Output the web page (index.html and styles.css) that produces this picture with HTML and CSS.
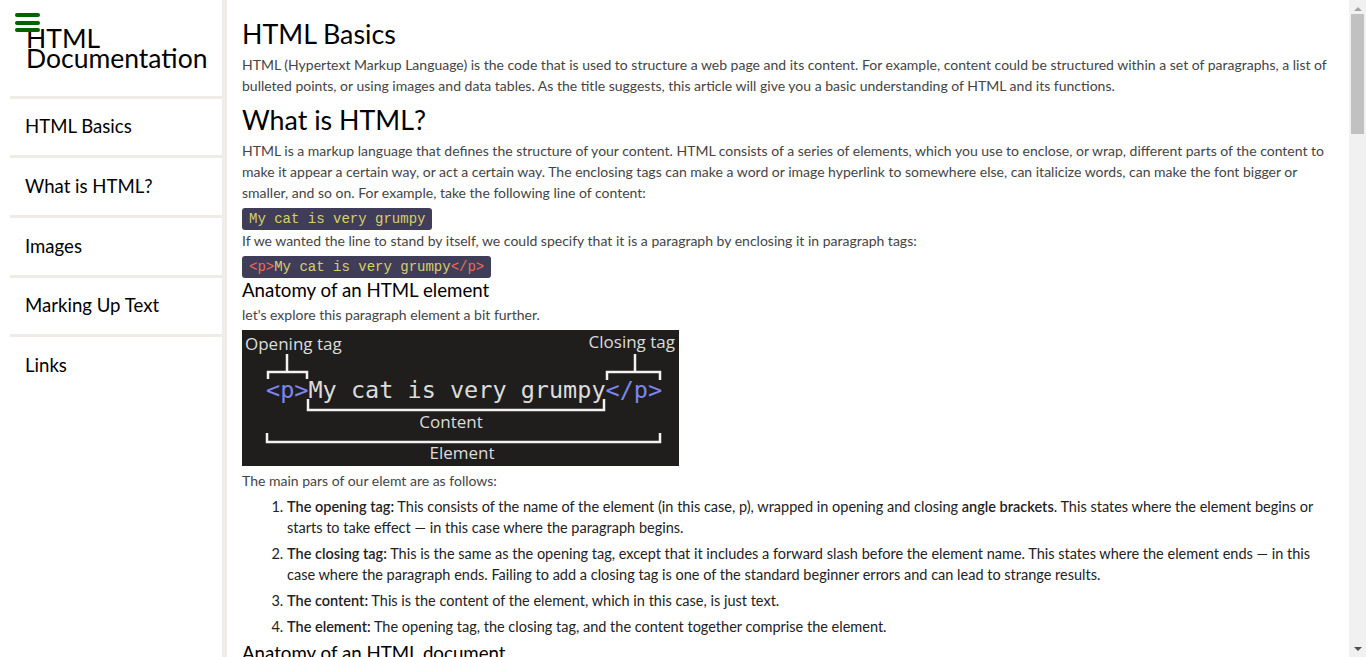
FILE: index.html
```html
<!DOCTYPE html>
<html lang="en">
<head>
<meta charset="utf-8">
<title>HTML Documentation</title>
<link rel="stylesheet" href="styles.css">
</head>
<body>
<nav class="navbar">
  <header class="nav-header">
    <span class="burger" aria-hidden="true"><i></i><i></i><i></i></span>
    <h1 class="nav-title">HTML Documentation</h1>
  </header>
  <ul class="nav-list">
    <li><a class="nav-link" href="#html_basics">HTML Basics</a></li>
    <li><a class="nav-link" href="#what_is_html">What is HTML?</a></li>
    <li><a class="nav-link" href="#images">Images</a></li>
    <li><a class="nav-link" href="#marking_up_text">Marking Up Text</a></li>
    <li><a class="nav-link" href="#links">Links</a></li>
  </ul>
</nav>
<main class="main-doc">
  <section class="main-section" id="html_basics">
    <h2 class="sec-title">HTML Basics</h2>
    <p>HTML (Hypertext Markup Language) is the code that is used to structure a web page and its content. For example, content could be structured within a set of paragraphs, a list of bulleted points, or using images and data tables. As the title suggests, this article will give you a basic understanding of HTML and its functions.</p>
  </section>
  <section class="main-section" id="what_is_html">
    <h2 class="sec-title">What is HTML?</h2>
    <p>HTML is a markup language that defines the structure of your content. HTML consists of a series of elements, which you use to enclose, or wrap, different parts of the content to make it appear a certain way, or act a certain way. The enclosing tags can make a word or image hyperlink to somewhere else, can italicize words, can make the font bigger or smaller, and so on. For example, take the following line of content:</p>
    <code class="code">My cat is very grumpy</code>
    <p>If we wanted the line to stand by itself, we could specify that it is a paragraph by enclosing it in paragraph tags:</p>
    <code class="code"><span class="tag">&lt;p&gt;</span>My cat is very grumpy<span class="tag">&lt;/p&gt;</span></code>
    <h3 class="sub-title">Anatomy of an HTML element</h3>
    <p>let's explore this paragraph element a bit further.</p>
    <svg class="anatomy" width="437" height="136" viewBox="0 0 437 136" role="img" aria-label="Anatomy of an HTML element">
      <rect width="437" height="136" fill="#1f1e1d"/>
      <g font-family="'Open Sans', 'DejaVu Sans', sans-serif" font-size="17" fill="#dcdcdc">
        <text x="3" y="20">Opening tag</text>
        <text x="433" y="18" text-anchor="end">Closing tag</text>
        <text x="209" y="98" text-anchor="middle">Content</text>
        <text x="220" y="129" text-anchor="middle">Element</text>
      </g>
      <text x="24" y="68" font-family="'DejaVu Sans Mono', monospace" font-size="23.5" fill="#dcdcdc"><tspan fill="#7d86f0">&lt;p&gt;</tspan>My cat is very grumpy<tspan fill="#7d86f0">&lt;/p&gt;</tspan></text>
      <g fill="none" stroke="#f2f2f2" stroke-width="2.5">
        <path d="M45 24 V42 M26 49 V42 H65 V49"/>
        <path d="M393 24 V42 M365 50 V42 H418 V50"/>
        <path d="M66 69 V80 H362 V69"/>
        <path d="M25 103 V112 H418 V103"/>
      </g>
    </svg>
    <p>The main pars of our elemt are as follows:</p>
    <ol class="parts">
      <li><b>The opening tag:</b> This consists of the name of the element (in this case, p), wrapped in opening and closing <b>angle brackets</b>. This states where the element begins or starts to take effect — in this case where the paragraph begins.</li>
      <li><b>The closing tag:</b> This is the same as the opening tag, except that it includes a forward slash before the element name. This states where the element ends — in this case where the paragraph ends. Failing to add a closing tag is one of the standard beginner errors and can lead to strange results.</li>
      <li><b>The content:</b> This is the content of the element, which in this case, is just text.</li>
      <li><b>The element:</b> The opening tag, the closing tag, and the content together comprise the element.</li>
    </ol>
    <h3 class="sub-title">Anatomy of an HTML document</h3>
    <p>That wraps up the basics of individual HTML elements, but they aren't handy on their own. Now we'll look at how individual elements combine to form an entire HTML page:</p>
    <code class="code block">&lt;!DOCTYPE html&gt;<br>&lt;html&gt;<br>&nbsp;&nbsp;&lt;head&gt;<br>&nbsp;&nbsp;&nbsp;&nbsp;&lt;meta charset="utf-8"&gt;<br>&nbsp;&nbsp;&nbsp;&nbsp;&lt;title&gt;My test page&lt;/title&gt;<br>&nbsp;&nbsp;&lt;/head&gt;<br>&nbsp;&nbsp;&lt;body&gt;<br>&nbsp;&nbsp;&nbsp;&nbsp;&lt;img src="images/firefox-icon.png" alt="My test image"&gt;<br>&nbsp;&nbsp;&lt;/body&gt;<br>&lt;/html&gt;</code>
    <p>Here, we have the following:</p>
    <ul class="parts">
      <li><b>&lt;!DOCTYPE html&gt;</b> — doctype. It is a required preamble.</li>
      <li><b>&lt;html&gt;&lt;/html&gt;</b> — the html element. This element wraps all the content on the entire page and is sometimes known as the root element.</li>
      <li><b>&lt;head&gt;&lt;/head&gt;</b> — the head element. This element acts as a container for all the stuff you want to include on the HTML page that isn't the content you are showing to your page's viewers.</li>
      <li><b>&lt;meta charset="utf-8"&gt;</b> — This element sets the character set your document should use to UTF-8.</li>
      <li><b>&lt;title&gt;&lt;/title&gt;</b> — the title element. This sets the title of your page, which is the title that appears in the browser tab the page is loaded in.</li>
      <li><b>&lt;body&gt;&lt;/body&gt;</b> — the body element. This contains all the content that you want to show to web users when they visit your page.</li>
    </ul>
  </section>
  <section class="main-section" id="images">
    <h2 class="sec-title">Images</h2>
    <p>Let's turn our attention to the &lt;img&gt; element again:</p>
    <code class="code">&lt;img src="images/firefox-icon.png" alt="My test image"&gt;</code>
    <p>As we said before, it embeds an image into our page in the position it appears. It does this via the src (source) attribute, which contains the path to our image file.</p>
    <p>We have also included an alt (alternative) attribute. In this attribute, you specify descriptive text for users who cannot see the image, possibly because of the following reasons:</p>
    <ol class="parts">
      <li>They are visually impaired. Users with significant visual impairments often use tools called screen readers to read out the alt text to them.</li>
      <li>Something has gone wrong causing the image not to display. For example, try deliberately changing the path inside your src attribute to make it incorrect.</li>
    </ol>
    <p>The keywords for alt text are "descriptive text". The alt text you write should provide the reader with enough information to have a good idea of what the image conveys.</p>
  </section>
  <section class="main-section" id="marking_up_text">
    <h2 class="sec-title">Marking Up Text</h2>
    <p>This section will cover some of the essential HTML elements you'll use for marking up the text.</p>
    <h3 class="sub-title">Headings</h3>
    <p>Heading elements allow you to specify that certain parts of your content are headings — or subheadings. In the same way that a book has the main title, chapter titles, and subtitles, an HTML document can too. HTML contains 6 heading levels, &lt;h1&gt;–&lt;h6&gt;, although you'll commonly only use 3 to 4 at most:</p>
    <code class="code block">&lt;h1&gt;My main title&lt;/h1&gt;<br>&lt;h2&gt;My top level heading&lt;/h2&gt;<br>&lt;h3&gt;My subheading&lt;/h3&gt;<br>&lt;h4&gt;My sub-subheading&lt;/h4&gt;</code>
    <h3 class="sub-title">Paragraphs</h3>
    <p>As explained above, &lt;p&gt; elements are for containing paragraphs of text; you'll use these frequently when marking up regular text content:</p>
    <code class="code">&lt;p&gt;This is a single paragraph&lt;/p&gt;</code>
    <h3 class="sub-title">Lists</h3>
    <p>A lot of the web's content is lists and HTML has special elements for these. Marking up lists always consists of at least 2 elements. The most common list types are ordered and unordered lists:</p>
    <ol class="parts">
      <li><b>Unordered lists</b> are for lists where the order of the items doesn't matter, such as a shopping list. These are wrapped in a &lt;ul&gt; element.</li>
      <li><b>Ordered lists</b> are for lists where the order of the items does matter, such as a recipe. These are wrapped in an &lt;ol&gt; element.</li>
    </ol>
    <p>Each item inside the lists is put inside an &lt;li&gt; (list item) element.</p>
  </section>
  <section class="main-section" id="links">
    <h2 class="sec-title">Links</h2>
    <p>Links are very important — they are what makes the web a web! To add a link, we need to use a simple element — &lt;a&gt; — "a" being the short form for "anchor". To make text within your paragraph into a link, follow these steps:</p>
    <ol class="parts">
      <li>Choose some text. We chose the text "Mozilla Manifesto".</li>
      <li>Wrap the text in an &lt;a&gt; element.</li>
      <li>Give the &lt;a&gt; element an href attribute.</li>
      <li>Fill in the value of this attribute with the web address that you want the link to link to.</li>
    </ol>
    <code class="code">&lt;a href="https://www.mozilla.org/en-US/about/manifesto/"&gt;Mozilla Manifesto&lt;/a&gt;</code>
    <p>You might get unexpected results if you omit the https:// or http:// part, called the protocol, at the beginning of the web address. After making a link, click it to make sure it is sending you where you wanted it to.</p>
    <p>href might appear like a rather obscure choice for an attribute name at first. If you are having trouble remembering it, remember that it stands for hypertext reference.</p>
  </section>
</main>
<div class="scrollbar" aria-hidden="true">
  <span class="sb-arrow sb-up"></span>
  <span class="sb-track"><span class="sb-thumb"></span></span>
  <span class="sb-arrow sb-down"></span>
</div>
</body>
</html>
```

FILE: styles.css
```css
* { box-sizing: border-box; }

html, body {
  margin: 0;
  padding: 0;
}

body {
  display: flex;
  align-items: flex-start;
  font-family: Lato, "Noto Sans", sans-serif;
  color: #000;
  background: #fff;
}

.navbar {
  position: sticky;
  top: 0;
  flex: 0 0 227px;
  height: 100vh;
  border-right: 5px solid #f0ede8;
  background: #fff;
}

.nav-header {
  position: relative;
  height: 95.5px;
  padding: 28px 0 0 26px;
}

.burger {
  position: absolute;
  left: 15px;
  top: 13px;
  display: flex;
  flex-direction: column;
  gap: 3.5px;
}

.burger i {
  display: block;
  width: 25px;
  height: 4px;
  border-radius: 2px;
  background: #006400;
}

.nav-title {
  margin: 0;
  font-size: 26.5px;
  line-height: 20px;
  font-weight: 400;
}

.nav-list {
  list-style: none;
  margin: 0 0 0 10px;
  padding: 0;
}

.nav-list li {
  border-top: 3px solid #efebe6;
}

.nav-link {
  display: flex;
  align-items: center;
  height: 56.7px;
  padding: 0 0 1px 15px;
  font-size: 18.6px;
  color: #000;
  text-decoration: none;
}

.main-doc {
  flex: 1;
  min-width: 0;
  padding: 14.5px 16px 40px 15px;
}

.sec-title {
  margin: 4px 0;
  font-size: 26.8px;
  line-height: 31px;
  font-weight: 400;
}

.main-section + .main-section .sec-title {
  margin-top: 9px;
}

.sub-title {
  margin: 1px 0 2px;
  font-size: 18.7px;
  line-height: 23px;
  font-weight: 400;
}

.main-section p {
  margin: 0 0 5px;
  font-size: 14px;
  line-height: 21px;
  color: #444;
}

.code {
  display: block;
  width: fit-content;
  padding: 3px 7px;
  border-radius: 3px;
  background: #403d58;
  color: #d7d06b;
  font-family: "Liberation Mono", "Courier New", monospace;
  font-size: 14px;
  line-height: 16px;
  margin: 0;
}

.code.block {
  margin-bottom: 5px;
}

.tag { color: #f2685a; }

.anatomy {
  display: block;
  margin: 0 0 4px;
}

.parts {
  margin: 0;
  padding-left: 45px;
  font-size: 14.5px;
  line-height: 21px;
  color: #222;
}

.parts li {
  margin-bottom: 5px;
}

.parts b { font-weight: 600; }

.scrollbar {
  position: sticky;
  top: 0;
  flex: 0 0 17px;
  height: 100vh;
  display: flex;
  flex-direction: column;
  background: #f1f1f1;
}

.sb-arrow {
  flex: 0 0 17px;
  display: flex;
  align-items: center;
  justify-content: center;
}

.sb-arrow::before {
  content: "";
  width: 0;
  height: 0;
  border-left: 4px solid transparent;
  border-right: 4px solid transparent;
}

.sb-up::before {
  border-bottom: 4px solid #a3a3a3;
}

.sb-down::before {
  border-top: 4px solid #505050;
}

.sb-track {
  flex: 1;
  display: flex;
  flex-direction: column;
  padding: 0 2px;
  margin-top: -3px;
}

.sb-thumb {
  display: block;
  height: 120px;
  background: #c1c1c1;
}
```
